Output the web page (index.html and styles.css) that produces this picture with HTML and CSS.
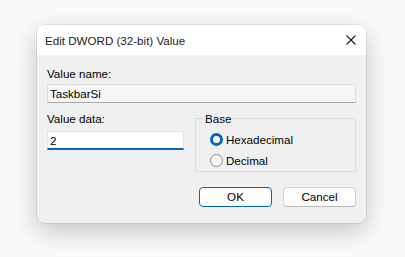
FILE: index.html
```html
<!DOCTYPE html>
<html lang="en">
<head>
    <meta charset="UTF-8">
    <title>Edit DWORD (32-bit) Value</title>
    <link rel="stylesheet" href="styles.css">
</head>
<body>
    <div class="dialog">
        <div class="titlebar">
            <span class="title">Edit DWORD (32-bit) Value</span>
            <span class="close">
                <svg width="10" height="10" viewBox="0 0 10 10">
                    <path d="M0.5 0.5 L9.5 9.5 M9.5 0.5 L0.5 9.5" stroke="#1b1b1b" stroke-width="1.1" fill="none"/>
                </svg>
            </span>
        </div>
        <div class="content">
            <div class="label">Value name:</div>
            <div class="field readonly">TaskbarSi</div>
            <div class="row">
                <div class="data-col">
                    <div class="label">Value data:</div>
                    <div class="field input">2</div>
                </div>
                <fieldset class="group">
                    <legend>Base</legend>
                    <div class="radio"><span class="dot checked"></span>Hexadecimal</div>
                    <div class="radio"><span class="dot"></span>Decimal</div>
                </fieldset>
            </div>
            <div class="buttons">
                <div class="btn primary">OK</div>
                <div class="btn">Cancel</div>
            </div>
        </div>
    </div>
</body>
</html>
```

FILE: styles.css
```css
html, body {
    margin: 0;
    width: 405px;
    height: 257px;
    background: #fafafa;
    overflow: hidden;
}
body {
    font-family: 'Segoe UI', 'Liberation Sans', Arial, sans-serif;
    font-size: 11.6px;
    color: #000;
    padding: 25px 0 0 37px;
    box-sizing: border-box;
}
.dialog {
    width: 329px;
    height: 198px;
    background: #f0f0f0;
    border-radius: 8px;
    overflow: hidden;
    box-shadow: 0 0 0 1px rgba(0, 0, 0, 0.07), 0 8px 26px rgba(0, 0, 0, 0.22);
    display: flex;
    flex-direction: column;
}
.titlebar {
    height: 30px;
    background: #fff;
    display: flex;
    align-items: center;
    justify-content: space-between;
    padding: 0 10px 0 8px;
}
.title {
    color: #1a1a1a;
    margin-top: 1px;
}
.close {
    display: flex;
    margin-top: -1px;
}
.content {
    padding: 11px 10px 0 10px;
    display: flex;
    flex-direction: column;
}
.label {
    line-height: 15px;
}
.field {
    box-sizing: border-box;
    height: 19px;
    line-height: 17px;
    padding-left: 2px;
}
.readonly {
    margin-top: 3px;
    background: #f6f6f6;
    border: 1px solid #dedede;
    border-bottom-color: #a8a8a8;
}
.row {
    display: flex;
    margin-top: 8px;
}
.data-col {
    width: 137px;
}
.input {
    margin-top: 5px;
    background: #fff;
    border: 1px solid #e3e3e3;
    border-bottom: 2px solid #0067c0;
}
.group {
    margin: 0 0 0 11px;
    padding: 3px 8px 0 8px;
    border: 1px solid #dcdcdc;
    flex: 1;
    min-width: 0;
}
.group legend {
    padding: 0 1px;
    line-height: 15px;
}
.radio {
    display: flex;
    align-items: center;
    height: 21px;
    padding-left: 6px;
}
.dot {
    box-sizing: border-box;
    width: 13px;
    height: 13px;
    border-radius: 50%;
    border: 1px solid #8a8a8a;
    background: #f7f7f7;
    margin-right: 3px;
}
.dot.checked {
    border: 3.5px solid #0067c0;
    background: #fff;
}
.buttons {
    display: flex;
    justify-content: flex-end;
    gap: 11px;
    margin-top: 15px;
}
.btn {
    box-sizing: border-box;
    width: 73px;
    height: 20px;
    line-height: 18px;
    text-align: center;
    background: #fdfdfd;
    border: 1px solid #d0d0d0;
    border-bottom-color: #b8b8b8;
    border-radius: 4px;
}
.btn.primary {
    border: 1px solid #0067c0;
}
```
